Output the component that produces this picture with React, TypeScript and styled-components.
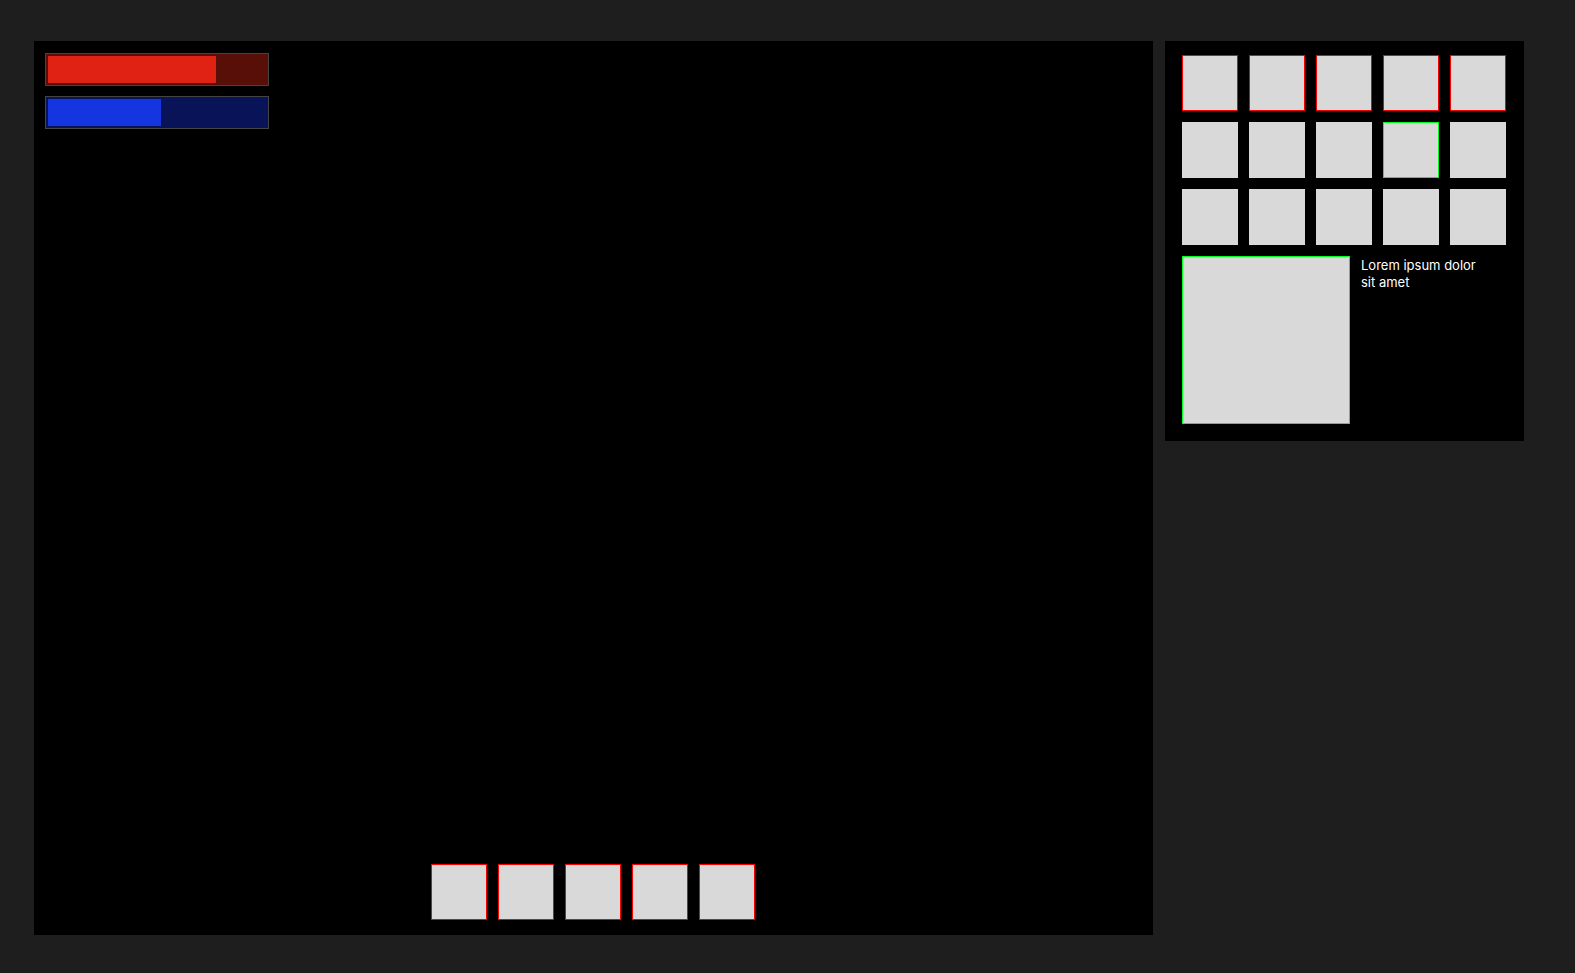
import React from "react";
import styled, { createGlobalStyle } from "styled-components";

const GlobalStyle = createGlobalStyle`
  *, *::before, *::after { box-sizing: border-box; }
  body {
    margin: 0;
    background: #1e1e1e;
    color: #ffffff;
    font-family: Inter, "Liberation Sans", sans-serif;
  }
`;

const Screen = styled.div`
  display: flex;
  align-items: flex-start;
  gap: 12px;
  min-height: 100vh;
  padding: 41px 51px 38px 34px;
`;

const Viewport = styled.main`
  flex: 1;
  align-self: stretch;
  display: flex;
  flex-direction: column;
  justify-content: space-between;
  padding: 12px 12px 15px 11px;
  background: #000000;
`;

const Vitals = styled.div`
  display: flex;
  flex-direction: column;
  gap: 10px;
`;

const Gauge = styled.div<{ $track: string }>`
  width: 224px;
  height: 33px;
  padding: 2px;
  border: 1px solid #444444;
  background: ${(p) => p.$track};
`;

const GaugeFill = styled.div<{ $color: string }>`
  height: 100%;
  background: ${(p) => p.$color};
`;

const Hotbar = styled.div`
  display: flex;
  justify-content: center;
  gap: 11px;
`;

const Inventory = styled.aside`
  flex: none;
  width: 359px;
  padding: 14px 17px 17px;
  background: #000000;
`;

const SlotGrid = styled.div`
  display: grid;
  grid-template-columns: repeat(5, 56px);
  gap: 11px;
`;

const outlines = {
  none: "#d9d9d9",
  equipped: "#ff0000",
  selected: "#00ff1e",
};

type Outline = keyof typeof outlines;

const Slot = styled.button<{ $outline: Outline }>`
  width: 56px;
  height: 56px;
  padding: 0;
  border: 1px solid ${(p) => outlines[p.$outline]};
  border-radius: 0;
  background: #d9d9d9;
  cursor: pointer;
`;

const Details = styled.section`
  display: flex;
  gap: 11px;
  margin-top: 11px;
`;

const Preview = styled.div`
  width: 168px;
  height: 168px;
  border: 1px solid ${outlines.selected};
  background: #d9d9d9;
`;

const Description = styled.p`
  width: 123px;
  margin: 0;
  padding-top: 1px;
  font-size: 13px;
  line-height: 17px;
`;

const hotbarSlots = [1, 2, 3, 4, 5];

const inventorySlots: Outline[] = [
  "equipped", "equipped", "equipped", "equipped", "equipped",
  "none", "none", "none", "selected", "none",
  "none", "none", "none", "none", "none",
];

function Vital(props: { label: string; value: number; color: string; track: string }) {
  return (
    <Gauge
      role="meter"
      aria-label={props.label}
      aria-valuemin={0}
      aria-valuemax={100}
      aria-valuenow={props.value}
      $track={props.track}
    >
      <GaugeFill $color={props.color} style={{ width: `${props.value}%` }} />
    </Gauge>
  );
}

export default function App() {
  return (
    <>
      <GlobalStyle />
      <Screen>
        <Viewport>
          <Vitals>
            <Vital label="Health" value={77} color="#df2214" track="#580f08" />
            <Vital label="Mana" value={52} color="#1435df" track="#081358" />
          </Vitals>
          <Hotbar>
            {hotbarSlots.map((n) => (
              <Slot key={n} type="button" aria-label={`Hotbar slot ${n}`} $outline="equipped" />
            ))}
          </Hotbar>
        </Viewport>
        <Inventory>
          <SlotGrid>
            {inventorySlots.map((outline, i) => (
              <Slot
                key={i}
                type="button"
                aria-label={`Inventory slot ${i + 1}`}
                aria-pressed={outline === "selected"}
                $outline={outline}
              />
            ))}
          </SlotGrid>
          <Details>
            <Preview />
            <Description>Lorem ipsum dolor sit amet</Description>
          </Details>
        </Inventory>
      </Screen>
    </>
  );
}
